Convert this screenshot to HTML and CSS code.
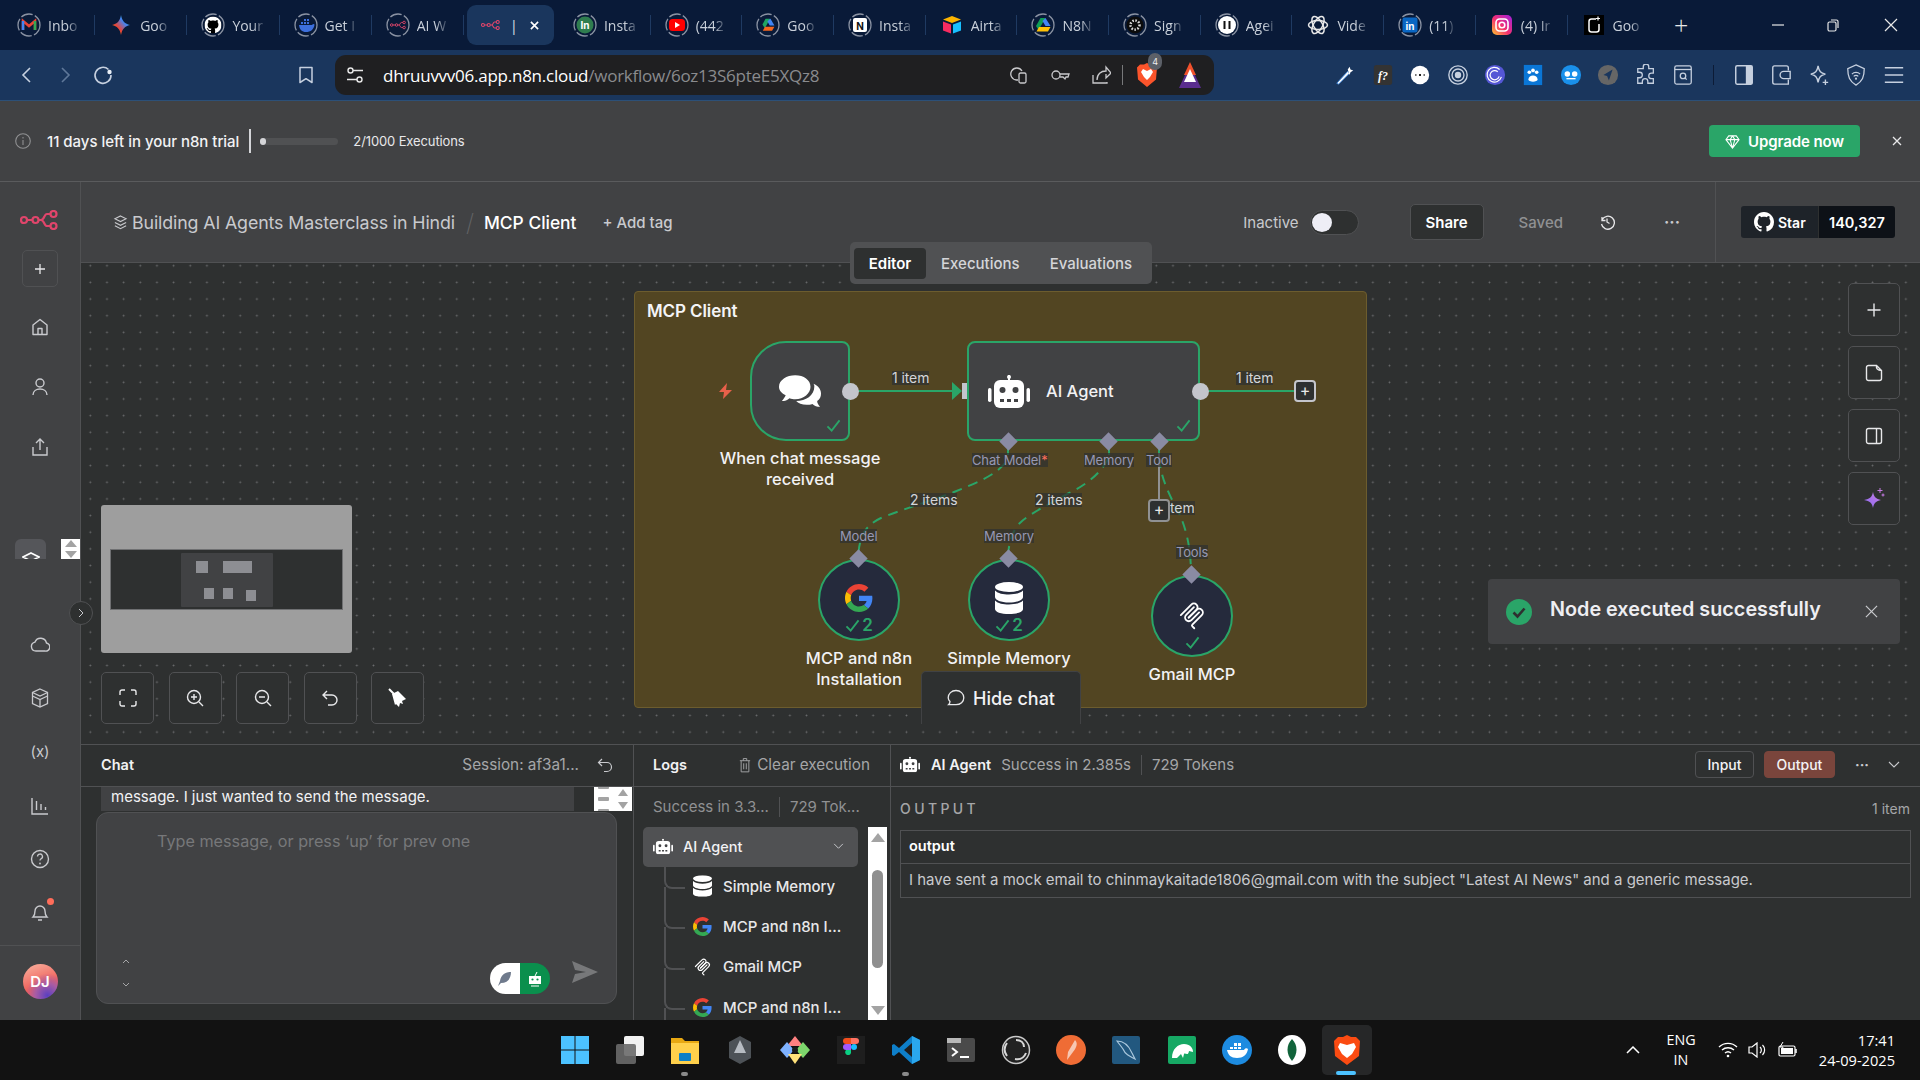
FILE: index.html
```html
<!DOCTYPE html>
<html lang="en">
<head>
<meta charset="utf-8">
<title>MCP Client - n8n</title>
<link rel="stylesheet" href="styles.css">
</head>
<body>
<svg class="sprite" width="0" height="0" aria-hidden="true">
  <defs>
    <symbol id="g" viewBox="0 0 48 48">
      <path fill="#EA4335" d="M24 9.5c3.54 0 6.71 1.22 9.21 3.6l6.85-6.85C35.9 2.38 30.47 0 24 0 14.62 0 6.51 5.38 2.56 13.22l7.98 6.19C12.43 13.72 17.74 9.5 24 9.5z"/>
      <path fill="#4285F4" d="M46.98 24.55c0-1.57-.15-3.09-.38-4.55H24v9.02h12.94c-.58 2.96-2.26 5.48-4.78 7.18l7.73 6c4.51-4.18 7.09-10.36 7.09-17.65z"/>
      <path fill="#FBBC05" d="M10.53 28.59c-.48-1.45-.76-2.99-.76-4.59s.27-3.14.76-4.59l-7.98-6.19C.92 16.46 0 20.12 0 24c0 3.88.92 7.54 2.56 10.78l7.97-6.19z"/>
      <path fill="#34A853" d="M24 48c6.48 0 11.93-2.13 15.89-5.81l-7.73-6c-2.15 1.45-4.92 2.3-8.16 2.3-6.26 0-11.57-4.22-13.47-9.91l-7.98 6.19C6.51 42.62 14.62 48 24 48z"/>
    </symbol>
    <symbol id="robot" viewBox="0 0 42 33">
      <path fill="#fff" d="M20 0h2v5h-2z"/><circle cx="21" cy="2" r="2" fill="#fff"/>
      <rect x="6" y="5" width="30" height="28" rx="6" fill="#fff"/>
      <rect x="0" y="13" width="3.5" height="14" rx="1.7" fill="#fff"/><rect x="38.5" y="13" width="3.5" height="14" rx="1.7" fill="#fff"/>
      <circle cx="14.5" cy="15" r="3" fill="#414244"/><circle cx="27.5" cy="15" r="3" fill="#414244"/>
      <path fill="#414244" d="M12 24h4v3h-4zM19 24h4v3h-4zM26 24h4v3h-4z"/>
    </symbol>
    <symbol id="db" viewBox="0 0 28 32">
      <ellipse cx="14" cy="5" rx="14" ry="5" fill="#fff"/>
      <path fill="#fff" d="M0 8.5c3 3 8 4 14 4s11-1 14-4V15c0 3-6 5.500-14 5.500S0 18 0 15zM0 18.500c3 3 8 4 14 4s11-1 14-4V27c0 3-6 5-14 5S0 30 0 27z"/>
    </symbol>
    <symbol id="mcp" viewBox="0 0 195 195">
      <g fill="none" stroke="#fff" stroke-width="12" stroke-linecap="round">
        <path d="M25 97.85L92.88 29.97C102.25 20.6 117.45 20.6 126.82 29.97 136.2 39.34 136.2 54.54 126.82 63.91L75.56 115.18"/>
        <path d="M76.27 114.47L126.82 63.91C136.2 54.54 151.39 54.54 160.77 63.91L161.12 64.27C170.49 73.64 170.49 88.83 161.12 98.21L99.72 159.6C96.6 162.72 96.6 167.79 99.72 170.91L112.33 183.52"/>
        <path d="M109.85 46.94L59.65 97.15C50.28 106.52 50.28 121.71 59.65 131.09 69.02 140.46 84.22 140.46 93.59 131.09L143.79 80.88"/>
      </g>
    </symbol>
    <symbol id="n8n" viewBox="0 0 38 20">
      <g fill="none" stroke="#e0456b" stroke-width="2.200">
        <circle cx="4" cy="10" r="3"/><circle cx="15.500" cy="10" r="3"/><circle cx="33.500" cy="4" r="3"/><circle cx="33.500" cy="16" r="3"/>
        <path d="M7 10h5.500M18.500 10h2.500c3.500 0 3-6 6-6h3.500M21 10c3.500 0 3 6 6 6h3.500"/>
      </g>
    </symbol>
    <symbol id="ring" viewBox="0 0 24 24">
      <circle cx="12" cy="12" r="11" fill="none" stroke="#8b93a3" stroke-width="1.300" stroke-dasharray="12 2.400"/>
    </symbol>
    <symbol id="gh" viewBox="0 0 16 16">
      <path fill="currentColor" d="M8 0C3.58 0 0 3.58 0 8c0 3.54 2.29 6.53 5.47 7.59.4.07.55-.17.55-.38 0-.19-.01-.82-.01-1.49-2.01.37-2.53-.49-2.69-.94-.09-.23-.48-.94-.82-1.13-.28-.15-.68-.52-.01-.53.63-.01 1.08.58 1.23.82.72 1.21 1.87.87 2.33.66.07-.52.28-.87.51-1.07-1.78-.2-3.64-.89-3.64-3.95 0-.87.31-1.59.82-2.15-.08-.2-.36-1.02.08-2.12 0 0 .67-.21 2.2.82.64-.18 1.32-.27 2-.27.68 0 1.36.09 2 .27 1.53-1.04 2.2-.82 2.2-.82.44 1.1.16 1.92.08 2.12.51.56.82 1.27.82 2.15 0 3.07-1.87 3.75-3.65 3.95.29.25.54.73.54 1.48 0 1.07-.01 1.93-.01 2.2 0 .21.15.46.55.38A8.013 8.013 0 0016 8c0-4.42-3.58-8-8-8z"/>
    </symbol>
    <symbol id="drive" viewBox="0 0 24 22">
      <path fill="#1fa463" d="M8 0h8L6.500 16.500 2.500 10z"/><path fill="#4285f4" d="M16 0l7 12h-8L11 5z"/><path fill="#f4661e" d="M7 14h16l-4 7H3z"/>
    </symbol>
    <symbol id="check" viewBox="0 0 16 14"><path d="M1.500 8l4.500 4.500L14.500 1.500" fill="none" stroke="#2aa568" stroke-width="2"/></symbol>
  </defs>
</svg>

<div class="app">
  <div class="tabstrip">
    <div class="tab"><svg class="fav" viewBox="0 0 24 24"><use href="#ring"/><path d="M6 17V8l6 5 6-5v9" fill="none" stroke="#ea4335" stroke-width="2.500"/><path d="M6 17V8" stroke="#4285f4" stroke-width="2.500"/><path d="M18 17V8" stroke="#34a853" stroke-width="2.500"/></svg><span class="tab-label">Inbo</span></div>
    <div class="tab"><svg class="fav" viewBox="0 0 24 24"><defs><linearGradient id="gem" x1="0" y1="1" x2="1" y2="0"><stop offset="0" stop-color="#f4b400"/><stop offset=".35" stop-color="#ea4335"/><stop offset=".65" stop-color="#4285f4"/><stop offset="1" stop-color="#34a853"/></linearGradient></defs><path fill="url(#gem)" d="M12 2c1 6 4 9 9 10-5 1-8 4-9 10-1-6-4-9-9-10 5-1 8-4 9-10z"/></svg><span class="tab-label">Goo</span></div>
    <div class="tab"><svg class="fav" viewBox="0 0 24 24"><use href="#ring"/><circle cx="12" cy="12" r="8.500" fill="#000"/><use href="#gh" x="3.500" y="3.500" width="17" height="17" class="gh-white"/></svg><span class="tab-label">Your</span></div>
    <div class="tab"><svg class="fav" viewBox="0 0 24 24"><use href="#ring"/><path fill="#3d6fdc" d="M5 12h13c1-1.500 2-1 2.500-.5-.5 5-4 7.500-8.500 7.500-4 0-6.500-2.500-7-7zM7 9h2v2H7zM10 9h2v2h-2zM13 9h2v2h-2zM10 6h2v2h-2zM13 6h2v2h-2z"/></svg><span class="tab-label">Get I</span></div>
    <div class="tab"><svg class="fav" viewBox="0 0 24 24"><use href="#ring"/><use href="#n8n" x="4" y="7" width="16" height="10"/></svg><span class="tab-label">AI W</span></div>
    <div class="tab tab-active"><svg class="fav-n8n" viewBox="0 0 38 20"><use href="#n8n"/></svg><span class="tab-bar">|</span><svg class="tab-x" viewBox="0 0 10 10"><path d="M1 1l8 8M9 1L1 9" stroke="#fff" stroke-width="1.800"/></svg></div>
    <div class="tab"><svg class="fav" viewBox="0 0 24 24"><use href="#ring"/><circle cx="12" cy="12" r="8.500" fill="#2f7d4f"/><text x="12" y="16" class="fav-text">In</text></svg><span class="tab-label">Insta</span></div>
    <div class="tab"><svg class="fav" viewBox="0 0 24 24"><use href="#ring"/><rect x="4" y="6" width="16" height="12" rx="3.500" fill="#f00"/><path d="M10 9l5 3-5 3z" fill="#fff"/></svg><span class="tab-label">(442</span></div>
    <div class="tab"><svg class="fav" viewBox="0 0 24 24"><use href="#ring"/><use href="#drive" x="5" y="5.500" width="14" height="13"/></svg><span class="tab-label">Goo</span></div>
    <div class="tab"><svg class="fav" viewBox="0 0 24 24"><use href="#ring"/><rect x="5" y="5" width="14" height="14" rx="2" fill="#fff"/><text x="12" y="16.500" class="fav-text fav-dark">N</text></svg><span class="tab-label">Insta</span></div>
    <div class="tab"><svg class="fav" viewBox="0 0 24 24"><path fill="#fcb400" d="M12 3l9 3.500L12 10 3 6.500z"/><path fill="#18bfff" d="M13 11.500l8-3v9l-8 3z"/><path fill="#f82b60" d="M11 11.500L3 8.500v9l8 3z"/></svg><span class="tab-label">Airta</span></div>
    <div class="tab"><svg class="fav" viewBox="0 0 24 24"><use href="#ring"/><path fill="#0f9d58" d="M9.500 5h5L7.500 17l-2.500-4z"/><path fill="#4285f4" d="M14.500 5l5 8h-5l-3-5z"/><path fill="#ffc107" d="M8 14h11.500L17 18.500H5.500z"/></svg><span class="tab-label">N8N</span></div>
    <div class="tab"><svg class="fav" viewBox="0 0 24 24"><use href="#ring"/><circle cx="12" cy="12" r="8.500" fill="#0c0c0c"/><circle cx="12" cy="12" r="4.500" fill="none" stroke="#ddd" stroke-width="2.500" stroke-dasharray="1.500 1.500"/></svg><span class="tab-label">Sign</span></div>
    <div class="tab"><svg class="fav" viewBox="0 0 24 24"><use href="#ring"/><circle cx="12" cy="12" r="9" fill="#fff"/><path d="M9.500 8v8M14.500 8v8" stroke="#111" stroke-width="2"/></svg><span class="tab-label">Agei</span></div>
    <div class="tab"><svg class="fav" viewBox="0 0 24 24"><g fill="none" stroke="#e8e8e8" stroke-width="1.500"><ellipse cx="12" cy="12" rx="9.500" ry="4.500"/><ellipse cx="12" cy="12" rx="9.500" ry="4.500" transform="rotate(60 12 12)"/><ellipse cx="12" cy="12" rx="9.500" ry="4.500" transform="rotate(120 12 12)"/></g></svg><span class="tab-label">Vide</span></div>
    <div class="tab"><svg class="fav" viewBox="0 0 24 24"><use href="#ring"/><rect x="4.500" y="4.500" width="15" height="15" rx="2" fill="#0a66c2"/><text x="12" y="16.500" class="fav-text">in</text></svg><span class="tab-label">(11)</span></div>
    <div class="tab"><svg class="fav" viewBox="0 0 24 24"><defs><linearGradient id="ig" x1="0" y1="1" x2="1" y2="0"><stop offset="0" stop-color="#fdc830"/><stop offset=".45" stop-color="#f5306f"/><stop offset="1" stop-color="#a020e0"/></linearGradient></defs><rect x="2" y="2" width="20" height="20" rx="5" fill="url(#ig)"/><rect x="6" y="6" width="12" height="12" rx="3.500" fill="none" stroke="#fff" stroke-width="1.600"/><circle cx="12" cy="12" r="2.800" fill="none" stroke="#fff" stroke-width="1.600"/></svg><span class="tab-label">(4) Ir</span></div>
    <div class="tab tab-last"><svg class="fav" viewBox="0 0 24 24"><rect x="2" y="2" width="20" height="20" fill="#000"/><path d="M14 6H9.500A2.500 2.500 0 0 0 7 8.500v8A2.500 2.500 0 0 0 9.500 19h5a2.500 2.500 0 0 0 2.500-2.500V11" fill="none" stroke="#fff" stroke-width="1.500"/><path d="M16 3.500v4M14 5.500h4" stroke="#fff" stroke-width="1.200"/></svg><span class="tab-label">Goo</span></div>
    <div class="tab-new">+</div>
    <div class="win">
      <svg class="win-ic" viewBox="0 0 14 14"><path d="M1 7h12" stroke="#e8e8e8" stroke-width="1.200"/></svg>
      <svg class="win-ic" viewBox="0 0 14 14"><rect x="2" y="4" width="8" height="9" rx="1.500" fill="none" stroke="#e8e8e8" stroke-width="1.200"/><path d="M5 2h5.500A1.500 1.500 0 0 1 12 3.500V10" fill="none" stroke="#e8e8e8" stroke-width="1.200"/></svg>
      <svg class="win-ic" viewBox="0 0 14 14"><path d="M1 1l12 12M13 1L1 13" stroke="#e8e8e8" stroke-width="1.200"/></svg>
    </div>
  </div>

  <div class="toolbar">
    <button class="tb"><svg class="ic18" viewBox="0 0 18 18"><path d="M12 2L5 9l7 7" fill="none" stroke="#c6d0df" stroke-width="1.600"/></svg></button>
    <button class="tb"><svg class="ic18" viewBox="0 0 18 18"><path d="M6 2l7 7-7 7" fill="none" stroke="#5f7899" stroke-width="1.600"/></svg></button>
    <button class="tb"><svg class="ic20" viewBox="0 0 20 20"><path d="M15.500 4.500A8 8 0 1 0 18 10" fill="none" stroke="#c6d0df" stroke-width="1.600"/><circle cx="16.500" cy="7" r="2.200" fill="#e8eef6"/></svg></button>
    <button class="tb tb-book"><svg class="ic20" viewBox="0 0 20 20"><path d="M4 2.500h12v15l-6-3.800-6 3.800z" fill="none" stroke="#c6d0df" stroke-width="1.500" stroke-linejoin="round"/></svg></button>
    <div class="urlbar">
      <svg class="url-tune" viewBox="0 0 18 18"><g fill="none" stroke="#e8e8e8" stroke-width="1.400"><circle cx="4.500" cy="4.500" r="2.500"/><circle cx="13.500" cy="13.500" r="2.500"/><path d="M7 4.500h10M1 13.500h10"/></g></svg>
      <span class="url-host">dhruuvvv06.app.n8n.cloud</span><span class="url-path">/workflow/6oz13S6pteE5XQz8</span>
      <div class="url-right">
        <svg class="url-ic" viewBox="0 0 20 20"><g fill="none" stroke="#c9c9cc" stroke-width="1.300"><path d="M9 15H7.500a6 6 0 1 1 5.500-9"/><rect x="10" y="8" width="7" height="10" rx="1.500"/></g></svg>
        <svg class="url-ic" viewBox="0 0 20 20"><g fill="none" stroke="#c9c9cc" stroke-width="1.300"><circle cx="6" cy="10" r="4"/><path d="M10 9h9l-1 3h-2l-1 2-2-2h-3"/></g></svg>
        <svg class="url-ic" viewBox="0 0 20 20"><g fill="none" stroke="#c9c9cc" stroke-width="1.300"><path d="M2 10v8h14v-1"/><path d="M6 15c0-6 4-9 9-9V2l5 6-5 5V9"/></g></svg>
        <span class="url-sep"></span>
        <span class="brave"><svg class="brave-ic" viewBox="0 0 20 24"><path fill="#fb542b" d="M10 0l3 1.500h4l3 3-1 12-9 7.500-9-7.500-1-12 3-3h4z"/><path fill="#fff" d="M6 6l4 2 4-2 2 3-3 5-3 3-3-3-3-5z"/></svg><span class="brave-badge">4</span></span>
        <svg class="url-tri" viewBox="0 0 22 26"><path fill="#f1512c" d="M11 0l6 13H5z"/><path fill="#5a2d8f" d="M0 26L6 13h10l6 13z"/><path fill="#fff" d="M11 7l6 13H5z"/></svg>
      </div>
    </div>
    <div class="exts">
      <svg class="ext" viewBox="0 0 24 24"><path d="M3 21L15 8l2 2L5 22z" fill="#fff" stroke="#3b82d6" stroke-width="1"/><path d="M15 6l2-3 1 3 3 1-3 2-1 3-1-3z" fill="#fff"/></svg>
      <svg class="ext" viewBox="0 0 24 24"><rect x="2" y="1" width="20" height="22" rx="3" fill="#333"/><text x="12" y="17" class="ext-f">f?</text></svg>
      <svg class="ext" viewBox="0 0 24 24"><circle cx="12" cy="12" r="10" fill="#fff"/><path d="M7 12h1M11 12h2M16 12h1" stroke="#111" stroke-width="2"/></svg>
      <svg class="ext" viewBox="0 0 24 24"><g fill="none" stroke="#c6d0df" stroke-width="1.500"><circle cx="12" cy="12" r="10"/><circle cx="12" cy="12" r="6.500"/></g><circle cx="12" cy="12" r="3.500" fill="#c6d0df"/></svg>
      <svg class="ext" viewBox="0 0 24 24"><circle cx="12" cy="12" r="11" fill="#5557d6"/><g fill="none" stroke="#fff" stroke-width="1.300"><path d="M17 6a8 8 0 1 0 2 8"/><path d="M15 8.500a5 5 0 1 0 1.500 5"/></g></svg>
      <svg class="ext" viewBox="0 0 24 24"><rect x="2" y="1" width="20" height="22" fill="#0a76d6"/><circle cx="8" cy="9" r="2" fill="#fff"/><circle cx="16" cy="9" r="2" fill="#fff"/><circle cx="12" cy="7" r="2" fill="#fff"/><path d="M7 17c0-6 10-6 10 0 0 3-10 3-10 0z" fill="#fff"/></svg>
      <svg class="ext" viewBox="0 0 24 24"><circle cx="12" cy="12" r="11" fill="#1a90ea"/><circle cx="8" cy="11" r="3" fill="#fff"/><circle cx="16" cy="11" r="3" fill="#fff"/><path d="M7 16h10" stroke="#fff" stroke-width="1.500"/></svg>
      <svg class="ext" viewBox="0 0 24 24"><circle cx="12" cy="12" r="11" fill="#666"/><path d="M7 12l10-6-4 12-2-5z" fill="#1a365d"/></svg>
      <svg class="ext" viewBox="0 0 24 24"><path d="M9 3a3 3 0 0 1 6 0v2h5v5h-2a3 3 0 0 0 0 6h2v5h-6v-2a3 3 0 0 0-6 0v2H3v-6h2a3 3 0 0 0 0-6H3V5h6z" fill="none" stroke="#c6d0df" stroke-width="1.400"/></svg>
      <svg class="ext" viewBox="0 0 24 24"><rect x="3" y="2" width="18" height="20" rx="2" fill="none" stroke="#c6d0df" stroke-width="1.400"/><path d="M3 6h18" stroke="#c6d0df" stroke-width="1.400"/><circle cx="12" cy="13" r="3" fill="none" stroke="#c6d0df" stroke-width="1.400"/><path d="M14 15l2 2" stroke="#c6d0df" stroke-width="1.400"/></svg>
      <span class="ext-sep"></span>
      <svg class="ext" viewBox="0 0 24 24"><rect x="3" y="2" width="18" height="20" rx="1.500" fill="none" stroke="#c6d0df" stroke-width="1.600"/><rect x="14" y="2" width="7" height="20" fill="#c6d0df"/></svg>
      <svg class="ext" viewBox="0 0 24 24"><path d="M20 7V4a2 2 0 0 0-2-2H5a2 2 0 0 0-2 2v16a2 2 0 0 0 2 2h15v-5" fill="none" stroke="#c6d0df" stroke-width="1.500"/><path d="M22 8h-7a4 4 0 0 0 0 8h7z" fill="none" stroke="#c6d0df" stroke-width="1.500"/></svg>
      <svg class="ext" viewBox="0 0 24 24"><path d="M11 2c1 6 3 8 8 9-5 1-7 3-8 9-1-6-3-8-8-9 5-1 7-3 8-9z" fill="none" stroke="#c6d0df" stroke-width="1.500"/><path d="M19 17v6M16 20h6" stroke="#c6d0df" stroke-width="1.500"/></svg>
      <svg class="ext" viewBox="0 0 24 24"><path d="M12 1l9 4c0 9-2 14-9 18-7-4-9-9-9-18z" fill="none" stroke="#c6d0df" stroke-width="1.400"/><path d="M7.500 11a6.500 6.500 0 0 1 9 0M9.500 13.500a3.500 3.500 0 0 1 5 0" fill="none" stroke="#c6d0df" stroke-width="1.300"/><circle cx="12" cy="16" r="1.200" fill="#c6d0df"/></svg>
      <svg class="ext" viewBox="0 0 24 24"><path d="M2 4h20M2 12h20M2 20h20" stroke="#c6d0df" stroke-width="1.700"/></svg>
    </div>
  </div>

  <div class="banner">
    <svg class="ban-info" viewBox="0 0 16 16"><circle cx="8" cy="8" r="7.300" fill="none" stroke="#909193" stroke-width="1.100"/><path d="M8 7v5M8 4v1.400" stroke="#909193" stroke-width="1.100"/></svg>
    <span class="ban-text">11 days left in your n8n trial</span>
    <span class="ban-div"></span>
    <span class="ban-bar"><span class="ban-dot"></span></span>
    <span class="ban-exec">2/1000 Executions</span>
    <button class="upgrade"><svg class="gem" viewBox="0 0 16 16"><path d="M4 2h8l3 4-7 9-7-9zM1 6h14M5.500 6L8 15l2.500-9L8 2 5.500 6z" fill="none" stroke="#fff" stroke-width="1.100"/></svg>Upgrade now</button>
    <svg class="ban-x" viewBox="0 0 10 10"><path d="M1 1l8 8M9 1L1 9" stroke="#e8e8ea" stroke-width="1.300"/></svg>
  </div>

  <div class="main">
    <aside class="side">
      <svg class="side-logo" viewBox="0 0 38 20"><use href="#n8n"/></svg>
      <div class="side-add"><svg class="ic12" viewBox="0 0 12 12"><path d="M6 1v10M1 6h10" stroke="#e8e8ea" stroke-width="1.300"/></svg></div>
      <svg class="sic sic-home" viewBox="0 0 20 20"><path d="M3 8l7-5.500L17 8v9.500H3zM8 17.500v-6h4v6" fill="none" stroke="#c9cace" stroke-width="1.400" stroke-linejoin="round"/></svg>
      <svg class="sic sic-user" viewBox="0 0 20 20"><circle cx="10" cy="6" r="4" fill="none" stroke="#c9cace" stroke-width="1.400"/><path d="M3 18c0-8 14-8 14 0" fill="none" stroke="#c9cace" stroke-width="1.400"/></svg>
      <svg class="sic sic-share" viewBox="0 0 20 20"><path d="M3 10v8h14v-8M10 13V2M6 6l4-4 4 4" fill="none" stroke="#c9cace" stroke-width="1.400"/></svg>
      <div class="side-glitch">
        <span class="glitch-box"><svg class="glitch-ic" viewBox="0 0 18 10"><path d="M9 1l8 4-8 4-8-4z" fill="none" stroke="#fff" stroke-width="1.600"/></svg></span>
        <span class="glitch-scroll"><span class="tri-up"></span><span class="tri-down"></span></span>
      </div>
      <svg class="sic sic-cloud" viewBox="0 0 20 20"><path d="M6 17a4.500 4.500 0 0 1-1-8.900A6 6 0 0 1 16.500 9a4 4 0 0 1-1.500 8z" fill="none" stroke="#c9cace" stroke-width="1.400"/></svg>
      <svg class="sic sic-cube" viewBox="0 0 20 20"><g fill="none" stroke="#c9cace" stroke-width="1.300"><path d="M10 1l7.500 3.500v11L10 19l-7.500-3.500v-11z"/><path d="M2.500 8L10 11.500 17.500 8M10 11.500V19M2.500 4.500L10 8l7.500-3.500"/></g></svg>
      <span class="sic-x">(x)</span>
      <svg class="sic sic-chart" viewBox="0 0 20 20"><path d="M2 2v16h16M6.500 14V5M11 14V8M15.500 14v-3" fill="none" stroke="#c9cace" stroke-width="1.400"/></svg>
      <svg class="sic sic-help" viewBox="0 0 20 20"><circle cx="10" cy="10" r="8.500" fill="none" stroke="#c9cace" stroke-width="1.400"/><path d="M7.500 7.500a2.500 2.500 0 1 1 3.500 2.300c-.7.400-1 .8-1 1.700" fill="none" stroke="#c9cace" stroke-width="1.300"/><circle cx="10" cy="14.500" r=".9" fill="#c9cace"/></svg>
      <span class="bell-wrap"><svg class="sic" viewBox="0 0 20 20"><path d="M3 15c1.500-1.500 2-3 2-6a5 5 0 0 1 10 0c0 3 .5 4.500 2 6zM8 18h4" fill="none" stroke="#c9cace" stroke-width="1.400"/></svg><span class="bell-dot"></span></span>
      <div class="side-foot"><span class="avatar">DJ</span></div>
      <span class="side-toggle"><svg class="ic8" viewBox="0 0 8 10"><path d="M2 1l4 4-4 4" fill="none" stroke="#c9cace" stroke-width="1"/></svg></span>
    </aside>

    <div class="work">
      <header class="head">
        <svg class="head-stack" viewBox="0 0 16 16"><g fill="none" stroke="#c9cace" stroke-width="1.100"><path d="M8 1l6 3-6 3-6-3z"/><path d="M2 8l6 3 6-3M2 11.500l6 3 6-3"/></g></svg>
        <span class="crumb">Building AI Agents Masterclass in Hindi</span>
        <span class="crumb-sep">/</span>
        <span class="crumb-cur">MCP Client</span>
        <span class="add-tag">+ Add tag</span>
        <span class="inactive">Inactive</span>
        <span class="toggle"><span class="knob"></span></span>
        <button class="share">Share</button>
        <span class="saved">Saved</span>
        <svg class="hist" viewBox="0 0 16 16"><path d="M3 3v3.500h3.500M2.500 10a6.500 6.500 0 1 0 .6-4.300M8 4.500V8l2.500 1.500" fill="none" stroke="#e8e8ea" stroke-width="1.300"/></svg>
        <span class="dots">···</span>
        <div class="star-area">
          <div class="star-box">
            <span class="star-l"><svg class="star-gh" viewBox="0 0 16 16"><use href="#gh"/></svg>Star</span>
            <span class="star-r">140,327</span>
          </div>
        </div>
      </header>

      <section class="canvas">
        <div class="view-tabs"><span class="vt vt-on">Editor</span><span class="vt">Executions</span><span class="vt">Evaluations</span></div>

        <div class="sticky"><span class="sticky-title">MCP Client</span></div>

        <svg class="edges" width="1838" height="481" viewBox="0 0 1838 481">
          <g fill="none" stroke="#2aa568" stroke-width="2">
            <path d="M777 128H873"/>
            <path d="M1118 128H1213"/>
            <path d="M927 178v14M1028 178v14M1078 178v14"/>
            <g stroke-dasharray="10 7">
              <path d="M924 200C915 212 895 220 873 229C850 238 825 245 800 255C785 262 778 272 777 296"/>
              <path d="M1027 196C1020 210 1005 222 988 230C970 240 950 250 940 259C932 266 927 280 927 296"/>
              <path d="M1078 195C1080 215 1088 232 1098 250C1105 265 1110 285 1110 311"/>
            </g>
          </g>
          <path d="M1078 190V237" stroke="#909193" stroke-width="2"/>
          <path d="M871 119l10 9-10 9z" fill="#2aa568"/>
        </svg>

        <span class="elabel el-1">1 item</span>
        <span class="elabel el-2">1 item</span>
        <span class="elabel el-3">2 items</span>
        <span class="elabel el-4">2 items</span>
        <span class="elabel el-5">tem</span>

        <svg class="bolt" viewBox="0 0 15 16"><path d="M9 0L1 9h5l-1 7 9-9H8z" fill="#e8604a"/></svg>

        <div class="node n-trigger">
          <svg class="chat-ic" viewBox="0 0 44 34"><path fill="#fff" d="M17 0c9 0 16 5 16 12 0 7-7 13-16 13-2 0-4 0-6-1-2 2-5 3-8 3 2-2 3-4 4-6-4-2-7-5-7-9C0 5 8 0 17 0z"/><path fill="#fff" d="M36 9c5 2 8 6 8 10 0 3-1 6-4 8 0 2 1 4 3 6-3 0-6-1-8-3-2 1-4 1-6 1-5 0-9-2-11-4 10 0 19-6 19-15 0-1 0-2-1-3z"/></svg>
          <svg class="n-check" viewBox="0 0 16 14"><use href="#check"/></svg>
        </div>
        <span class="dot d-1"></span>
        <span class="input-port"></span>

        <div class="node n-agent">
          <svg class="robot-ic" viewBox="0 0 42 33"><use href="#robot"/></svg>
          <span class="agent-name">AI Agent</span>
          <svg class="n-check" viewBox="0 0 16 14"><use href="#check"/></svg>
        </div>
        <span class="dot d-2"></span>
        <span class="plus p-out">+</span>

        <span class="dia di-1"></span><span class="dia di-2"></span><span class="dia di-3"></span>

        <span class="plabel pl-chat">Chat Model<b class="req">*</b></span>
        <span class="plabel pl-mem">Memory</span>
        <span class="plabel pl-tool">Tool</span>
        <span class="plus p-tool">+</span>
        <span class="plabel pl-model">Model</span>
        <span class="plabel pl-mem2">Memory</span>
        <span class="plabel pl-tools">Tools</span>

        <div class="circ c-model"><svg class="c-g" viewBox="0 0 48 48"><use href="#g"/></svg><span class="c-count"><svg class="c-check" viewBox="0 0 16 14"><use href="#check"/></svg>2</span></div>
        <div class="circ c-mem"><svg class="c-db" viewBox="0 0 28 32"><use href="#db"/></svg><span class="c-count"><svg class="c-check" viewBox="0 0 16 14"><use href="#check"/></svg>2</span></div>
        <div class="circ c-gmail"><svg class="c-mcp" viewBox="0 0 195 195"><use href="#mcp"/></svg><span class="c-count"><svg class="c-check" viewBox="0 0 16 14"><use href="#check"/></svg></span></div>
        <span class="dia di-4"></span><span class="dia di-5"></span><span class="dia di-6"></span>

        <span class="nlabel nl-trig">When chat message received</span>
        <span class="nlabel nl-model">MCP and n8n Installation</span>
        <span class="nlabel nl-mem">Simple Memory</span>
        <span class="nlabel nl-gmail">Gmail MCP</span>

        <button class="hide-chat"><svg class="hc-ic" viewBox="0 0 18 18"><path d="M9 1.500c4.500 0 7.800 3.200 7.800 7.200s-3.300 7-7.800 7H1.500c1-1 1.500-2.200 1.500-3.200-1-1-1.800-2.400-1.800-3.800C1.200 4.700 4.500 1.500 9 1.500z" fill="none" stroke="#e8e8ea" stroke-width="1.300"/></svg>Hide chat</button>

        <div class="minimap">
          <div class="mm-inner"><div class="mm-sticky">
            <span class="mm mm-a"></span><span class="mm mm-b"></span><span class="mm mm-c"></span><span class="mm mm-d"></span><span class="mm mm-e"></span>
          </div></div>
        </div>

        <div class="ctrls">
          <button class="ctrl"><svg class="ic18" viewBox="0 0 18 18"><path d="M1 6V3a2 2 0 0 1 2-2h3M12 1h3a2 2 0 0 1 2 2v3M17 12v3a2 2 0 0 1-2 2h-3M6 17H3a2 2 0 0 1-2-2v-3" fill="none" stroke="#e8e8ea" stroke-width="1.400"/></svg></button>
          <button class="ctrl"><svg class="ic18" viewBox="0 0 18 18"><circle cx="8" cy="8" r="6.500" fill="none" stroke="#e8e8ea" stroke-width="1.400"/><path d="M13 13l4 4M5 8h6M8 5v6" stroke="#e8e8ea" stroke-width="1.400"/></svg></button>
          <button class="ctrl"><svg class="ic18" viewBox="0 0 18 18"><circle cx="8" cy="8" r="6.500" fill="none" stroke="#e8e8ea" stroke-width="1.400"/><path d="M13 13l4 4M5 8h6" stroke="#e8e8ea" stroke-width="1.400"/></svg></button>
          <button class="ctrl"><svg class="ic18" viewBox="0 0 18 18"><path d="M6 2L2 6l4 4M2 6h9a5 5 0 0 1 0 10H7" fill="none" stroke="#e8e8ea" stroke-width="1.400"/></svg></button>
          <button class="ctrl"><svg class="ic22" viewBox="0 0 22 22"><path d="M2 2l6 6" stroke="#fff" stroke-width="2"/><path d="M5 7l6-3 8 8-4 2 1 3-3-1-1 4-3-3-1 1z" fill="#fff"/></svg></button>
        </div>

        <div class="rbtns">
          <button class="rbtn"><svg class="ic16" viewBox="0 0 16 16"><path d="M8 1.500v13M1.500 8h13" stroke="#e8e8ea" stroke-width="1.400"/></svg></button>
          <button class="rbtn"><svg class="ic18" viewBox="0 0 18 18"><path d="M3.500 1.500h8l5 5v8a2 2 0 0 1-2 2h-11a2 2 0 0 1-2-2v-11a2 2 0 0 1 2-2zM11.500 1.500c-.5 3 1 5 5 5" fill="none" stroke="#e8e8ea" stroke-width="1.400"/></svg></button>
          <button class="rbtn"><svg class="ic18" viewBox="0 0 18 18"><rect x="1.500" y="1.500" width="15" height="15" rx="2" fill="none" stroke="#e8e8ea" stroke-width="1.400"/><path d="M11.500 1.500v15" stroke="#e8e8ea" stroke-width="1.400"/></svg></button>
          <button class="rbtn"><svg class="ic22" viewBox="0 0 22 22"><defs><linearGradient id="spark" x1="0" y1="1" x2="1" y2="0"><stop offset="0" stop-color="#8b6cf0"/><stop offset="1" stop-color="#c77ae6"/></linearGradient></defs><path d="M10 4c1 5 3 7 8 8-5 1-7 3-8 8-1-5-3-7-9-8 6-1 8-3 9-8z" fill="url(#spark)"/><path d="M17 0v5M14.500 2.500h5M20 5.500v3M18.500 7h3" stroke="#c77ae6" stroke-width="1"/></svg></button>
        </div>

        <div class="toast">
          <svg class="toast-ic" viewBox="0 0 26 26"><circle cx="13" cy="13" r="13" fill="#2aa568"/><path d="M7.500 13.500l4 4 7-8" fill="none" stroke="#2e3030" stroke-width="2.600"/></svg>
          <span class="toast-text">Node executed successfully</span>
          <svg class="toast-x" viewBox="0 0 14 14"><path d="M1 1l12 12M13 1L1 13" stroke="#c9cace" stroke-width="1.300"/></svg>
        </div>
      </section>

      <section class="panel">
        <div class="p-chat">
          <div class="p-head">
            <span class="p-title">Chat</span>
            <span class="session">Session: af3a1...</span>
            <svg class="undo" viewBox="0 0 16 16"><path d="M5 2L1.500 5.500 5 9M1.500 5.500H10a4.500 4.500 0 0 1 0 9H7" fill="none" stroke="#c9cace" stroke-width="1.200"/></svg>
          </div>
          <div class="msg-row">
            <div class="msg">message. I just wanted to send the message.</div>
            <div class="msg-scroll"><span class="ms-dashes"><i></i><i></i><i></i></span><span class="ms-tris"><span class="tri-up"></span><span class="tri-down"></span></span></div>
          </div>
          <div class="chat-input">
            <span class="ph">Type message, or press ‘up’ for prev one</span>
            <div class="ci-bottom">
              <span class="ci-arrows"><svg class="ic8w" viewBox="0 0 8 5"><path d="M1 4l3-3 3 3" fill="none" stroke="#a5a6a8"/></svg><svg class="ic8w" viewBox="0 0 8 5"><path d="M1 1l3 3 3-3" fill="none" stroke="#a5a6a8"/></svg></span>
              <span class="pill">
                <span class="pill-l"><svg class="ic16" viewBox="0 0 16 16"><path d="M14 1C8 1 4 4 3 10l-2 5 3-3c6 0 10-4 10-11z" fill="#6f7a8c"/></svg></span>
                <span class="pill-r"><svg class="ic18" viewBox="0 0 18 18"><path d="M3 6h12v8H3z" fill="#fff"/><path d="M9 6l2-4" stroke="#fff"/><circle cx="6.500" cy="9.500" r="1.100" fill="#0a8f4d"/><circle cx="11.500" cy="9.500" r="1.100" fill="#0a8f4d"/><path d="M5 16h8" stroke="#fff"/></svg></span>
              </span>
              <svg class="send" viewBox="0 0 26 22"><path d="M0 0l26 11L0 22l3-9 11-2-11-2z" fill="#77787a"/></svg>
            </div>
          </div>
        </div>

        <div class="p-logs">
          <div class="p-head">
            <span class="p-title">Logs</span>
            <span class="clear"><svg class="clear-ic" viewBox="0 0 14 18"><path d="M1 4h12M5 4V1.500h4V4M2.500 4v13h9V4M5.500 7v7M8.500 7v7" fill="none" stroke="#a5a6a8" stroke-width="1.100"/></svg>Clear execution</span>
          </div>
          <div class="logs-sub"><span>Success in 3.3...</span><i class="vline"></i><span>729 Tok...</span></div>
          <div class="logs-body">
            <div class="tree">
              <div class="t-root"><svg class="t-robot" viewBox="0 0 42 33"><use href="#robot"/></svg><span class="t-root-name">AI Agent</span><svg class="t-chev" viewBox="0 0 12 8"><path d="M1 1l5 5 5-5" fill="none" stroke="#c9cace" stroke-width="1.100"/></svg></div>
              <div class="t-row"><svg class="t-ic t-db" viewBox="0 0 28 32"><use href="#db"/></svg><span>Simple Memory</span></div>
              <div class="t-row"><svg class="t-ic" viewBox="0 0 48 48"><use href="#g"/></svg><span>MCP and n8n I...</span></div>
              <div class="t-row"><svg class="t-ic" viewBox="0 0 195 195"><use href="#mcp"/></svg><span>Gmail MCP</span></div>
              <div class="t-row"><svg class="t-ic" viewBox="0 0 48 48"><use href="#g"/></svg><span>MCP and n8n I...</span></div>
            </div>
            <div class="log-scroll"><span class="tri-up tri-big"></span><span class="thumb"></span><span class="tri-down tri-big"></span></div>
          </div>
        </div>

        <div class="p-detail">
          <div class="p-head d-head">
            <svg class="d-robot" viewBox="0 0 42 33"><use href="#robot"/></svg>
            <span class="d-name">AI Agent</span>
            <span class="d-meta">Success in 2.385s</span>
            <i class="vline d-vline"></i>
            <span class="d-meta">729 Tokens</span>
            <button class="d-btn d-input">Input</button>
            <button class="d-btn d-output">Output</button>
            <span class="d-dots">···</span>
            <svg class="d-chev" viewBox="0 0 12 8"><path d="M1 1l5 5 5-5" fill="none" stroke="#c9cace" stroke-width="1.100"/></svg>
          </div>
          <div class="out-row"><span class="out-label">OUTPUT</span><span class="out-count">1 item</span></div>
          <table class="out-table">
            <thead><tr><th>output</th></tr></thead>
            <tbody><tr><td>I have sent a mock email to chinmaykaitade1806@gmail.com with the subject "Latest AI News" and a generic message.</td></tr></tbody>
          </table>
        </div>
      </section>
    </div>
  </div>

  <footer class="taskbar">
    <div class="apps">
      <span class="app-ic"><svg viewBox="0 0 30 30"><path fill="#4cc2ff" d="M1 1h13.500v13.500H1zM15.500 1H29v13.500H15.500zM1 15.500h13.500V29H1zM15.500 15.500H29V29H15.500z"/></svg></span>
      <span class="app-ic"><svg viewBox="0 0 30 30"><rect x="9" y="1" width="20" height="20" rx="2" fill="#f2f2f2"/><rect x="1" y="9" width="20" height="20" rx="2" fill="#6a6a6a" opacity=".9"/></svg></span>
      <span class="app-ic app-run"><svg viewBox="0 0 30 30"><path fill="#e8a812" d="M1 3h11l3 3h14v23H1z"/><path fill="#ffd04b" d="M1 8h28v21H1z"/><rect x="9" y="18" width="12" height="8" rx="1" fill="#0d7fc6"/></svg></span>
      <span class="app-ic"><svg viewBox="0 0 30 30"><path fill="#4d5257" d="M15 1l11 6v16l-11 6-11-6V7z"/><path fill="#b7bcc2" d="M15 5l6 13H9z"/></svg></span>
      <span class="app-ic"><svg viewBox="0 0 30 30"><path fill="#ff8080" d="M15 1l8 10H7z"/><path fill="#7fb2ff" d="M7 7L0 15l7 8 7-8z"/><path fill="#7dd66c" d="M23 7l7 8-7 8-7-8z"/><path fill="#ffe27a" d="M15 29l-7-10h14z"/><circle cx="15" cy="15" r="3" fill="#1c1c1c"/></svg></span>
      <span class="app-ic"><svg viewBox="0 0 30 30"><rect x="1" y="1" width="28" height="28" fill="#1e1e1e"/><path fill="#f24e1e" d="M10 3h5v6h-5a3 3 0 0 1 0-6z"/><path fill="#ff7262" d="M15 3h5a3 3 0 0 1 0 6h-5z"/><path fill="#a259ff" d="M10 9h5v6h-5a3 3 0 0 1 0-6z"/><circle cx="18" cy="12" r="3" fill="#1abcfe"/><path fill="#0acf83" d="M10 15h5v3a3 3 0 1 1-5-3z"/></svg></span>
      <span class="app-ic app-run"><svg viewBox="0 0 30 30"><path fill="#0e7fc9" d="M21 1l8 4v20l-8 4-13-12-5 4-2-1V10l2-1 5 4z"/><path fill="#2aa7ee" d="M21 1v28l8-4V5z"/><path fill="#1e1e1e" d="M21 8l-8 7 8 7z"/></svg></span>
      <span class="app-ic"><svg viewBox="0 0 30 30"><rect x="1" y="3" width="28" height="24" rx="2" fill="#4a4a4a"/><rect x="1" y="3" width="14" height="5" fill="#b8b8b8"/><path d="M6 13l5 4-5 4" fill="none" stroke="#fff" stroke-width="2"/><path d="M14 22h9" stroke="#fff" stroke-width="2"/></svg></span>
      <span class="app-ic"><svg viewBox="0 0 30 30"><circle cx="15" cy="15" r="13.500" fill="#222" stroke="#c9c9c9" stroke-width="1.500"/><path d="M15 5c5 0 8 3 8 7M25 18c-2 5-6 7-11 6M6 21c-3-4-3-9 0-13" fill="none" stroke="#d8d8d8" stroke-width="2"/></svg></span>
      <span class="app-ic"><svg viewBox="0 0 30 30"><circle cx="15" cy="15" r="15" fill="#ef6c35"/><path d="M19 5c3 3 2 7-2 12l-6 8 1-8z" fill="#f7c7b2"/></svg></span>
      <span class="app-ic"><svg viewBox="0 0 30 30"><rect x="1" y="1" width="28" height="28" rx="2" fill="#22587f"/><path d="M6 6c7 0 12 5 15 12l3 6c-6-3-10-5-12-10-2-3-4-5-6-8z" fill="none" stroke="#a9c7dc" stroke-width="1.200"/></svg></span>
      <span class="app-ic"><svg viewBox="0 0 30 30"><rect x="1" y="1" width="28" height="28" rx="2" fill="#16a864"/><path d="M5 23c0-9 6-14 12-14s9 4 9 8l-4-1c-1 6-4 1-5 3l-1 4-2-4-4 4z" fill="#fff"/></svg></span>
      <span class="app-ic"><svg viewBox="0 0 30 30"><circle cx="15" cy="15" r="15" fill="#1d8be0"/><path fill="#fff" d="M5 15h17c1-2 3-2 4-1-1 6-5 9-11 9-6 0-9-3-10-8zM8 12h3v2H8zM12 12h3v2h-3zM16 12h3v2h-3zM12 8h3v3h-3zM16 8h3v3h-3z"/></svg></span>
      <span class="app-ic"><svg viewBox="0 0 30 30"><ellipse cx="15" cy="15" rx="14" ry="15" fill="#fff"/><path d="M15 4c-6 6-6 15 0 22 6-7 6-16 0-22z" fill="#11633a"/></svg></span>
      <span class="app-ic app-brave"><svg viewBox="0 0 30 30"><path fill="#fb4b12" d="M15 0l4 2h5l4 4-1 15-12 9-12-9L2 6l4-4h5z"/><path fill="#fff" d="M8 8l7 2 7-2 2 4-4 7-5 4-5-4-4-7z"/></svg><i class="brave-line"></i></span>
    </div>
    <div class="tray">
      <svg class="tray-up" viewBox="0 0 14 8"><path d="M1 7l6-6 6 6" fill="none" stroke="#fff" stroke-width="1.500"/></svg>
      <span class="lang">ENG<br>IN</span>
      <svg class="tray-ic" viewBox="0 0 20 16"><g fill="none" stroke="#fff" stroke-width="1.400"><path d="M1 5a13 13 0 0 1 18 0M4 8a9 9 0 0 1 12 0M7 11a4.500 4.500 0 0 1 6 0"/></g><circle cx="10" cy="14" r="1.300" fill="#fff"/></svg>
      <svg class="tray-ic" viewBox="0 0 20 16"><path d="M1 5h3l5-4v14l-5-4H1z" fill="none" stroke="#fff" stroke-width="1.200"/><path d="M12 5a4 4 0 0 1 0 6M14.500 3a7 7 0 0 1 0 10" fill="none" stroke="#fff" stroke-width="1.200"/></svg>
      <svg class="tray-ic" viewBox="0 0 20 16"><rect x="1" y="4" width="16" height="10" rx="1.500" fill="none" stroke="#fff" stroke-width="1.200"/><rect x="3" y="6" width="12" height="6" fill="#fff"/><path d="M18 7v4" stroke="#fff" stroke-width="1.500"/><path d="M5 0L2 5h3L4 8" fill="none" stroke="#fff"/></svg>
      <span class="clock">17:41<br>24-09-2025</span>
    </div>
  </footer>
</div>
</body>
</html>
```

FILE: styles.css
```css
* { box-sizing: border-box; }
html, body { margin: 0; padding: 0; }
body { font-family: Inter, "Liberation Sans", sans-serif; background: #2e3030; color: #e8e8ea; overflow: hidden; }
button { font: inherit; color: inherit; background: none; border: 0; padding: 0; display: flex; align-items: center; justify-content: center; }
i { font-style: normal; }
svg { display: block; flex: none; }
.sprite { position: absolute; }
.app { width: 1920px; height: 1080px; display: flex; flex-direction: column; overflow: hidden; }

.ic8 { width: 8px; height: 10px; }
.ic12 { width: 12px; height: 12px; }
.ic16 { width: 16px; height: 16px; }
.ic18 { width: 18px; height: 18px; }
.ic20 { width: 20px; height: 20px; }
.ic22 { width: 22px; height: 22px; }

/* tab strip */
.tabstrip { height: 50px; flex: none; background: #091a38; display: flex; align-items: center; padding-left: 3px; font-family: "Open Sans", "Noto Sans", sans-serif; }
.tab { width: 91.7px; height: 40px; flex: none; display: flex; align-items: center; padding-left: 14px; position: relative; }
.tab:nth-child(-n+5) { width: 92.2px; }
.tab:not(.tab-active):not(.tab-last)::after { content: ""; position: absolute; right: 0; top: 10px; height: 20px; width: 1px; background: #1f3a62; }
.tab-active { background: #1a365d; border-radius: 9px; width: 87px; margin: 0 5px 0 3px; padding-left: 14px; }
.fav { width: 24px; height: 24px; }
.fav-text { font: 700 10px Inter, sans-serif; fill: #fff; text-anchor: middle; }
.fav-dark { fill: #111; }
.gh-white { color: #fff; }
.tab-label { margin-left: 7px; white-space: nowrap; font-size: 14px; color: #c9d0da; -webkit-mask-image: linear-gradient(90deg, #000 65%, rgba(0,0,0,.25)); mask-image: linear-gradient(90deg, #000 65%, rgba(0,0,0,.25)); }
.fav-n8n { width: 19px; height: 10px; }
.tab-bar { margin-left: 10px; font-size: 14px; color: #dfe3ea; }
.tab-x { width: 9px; height: 9px; margin-left: 12px; }
.tab-new { margin-left: 12px; font-size: 25px; font-weight: 300; color: #e8e8e8; width: 20px; text-align: center; line-height: 1; }
.win { margin-left: auto; display: flex; }
.win-ic { width: 14px; height: 14px; margin-right: 41px; }
.win-ic:nth-child(2) { margin-right: 44px; }
.win-ic:last-child { margin-right: 22px; }

/* toolbar */
.toolbar { height: 51px; flex: none; background: #1a365d; border-bottom: 1px solid #2c5078; display: flex; align-items: center; padding-left: 8px; }
.tb { width: 38px; height: 38px; }
.tb-book { margin-left: 165px; }
.urlbar { width: 879px; height: 40px; margin-left: 10px; background: #1f1f21; border-radius: 11px; display: flex; align-items: center; padding-left: 11px; font-family: "Open Sans", "Noto Sans", sans-serif; font-size: 17px; letter-spacing: -.25px; }
.url-tune { width: 18px; height: 18px; margin-right: 19px; }
.url-host { color: #fff; }
.url-path { color: #8a8b8e; }
.url-right { margin-left: auto; display: flex; align-items: center; padding-right: 13px; }
.url-ic { width: 20px; height: 20px; margin-right: 21px; }
.url-sep { width: 1px; height: 20px; background: #77787a; margin: 0 14px 0 0; }
.url-ic:nth-child(3) { margin-right: 11px; }
.brave { position: relative; display: block; margin-right: 22px; }
.brave-ic { width: 20px; height: 24px; }
.brave-badge { position: absolute; left: 11px; top: -10px; width: 14px; height: 17px; border-radius: 8px; background: #5c6068; font: 9px Inter, sans-serif; color: #eee; display: flex; align-items: center; justify-content: center; }
.url-tri { width: 22px; height: 26px; }
.exts { display: flex; align-items: center; margin-left: 120px; gap: 15.600px; }
.ext { width: 22px; height: 22px; }
.ext-f { font: italic 700 13px "Liberation Serif", serif; fill: #fff; text-anchor: middle; }
.ext-sep { width: 1px; height: 20px; background: #0c1b36; margin: 0 3px; }

/* trial banner */
.banner { height: 81px; flex: none; background: #414244; border-bottom: 1px solid #5a5b5d; display: flex; align-items: center; padding-left: 15px; }
.ban-info { width: 16px; height: 16px; }
.ban-text { margin-left: 16px; font-size: 15px; font-weight: 500; color: #f2f2f4; letter-spacing: -.03px; }
.ban-div { width: 2px; height: 24px; background: #d4d5d8; margin-left: 10px; }
.ban-bar { width: 78px; height: 7px; margin-left: 9px; background: #505153; border-radius: 4px; display: block; }
.ban-dot { display: block; width: 6px; height: 7px; border-radius: 3px; background: #d4d5d8; }
.ban-exec { margin-left: 15px; font-size: 13px; color: #e8e8ea; letter-spacing: -.12px; }
.upgrade { margin-left: auto; width: 151px; height: 32px; background: #2aa568; border-radius: 4px; font-size: 15px; font-weight: 600; color: #fff; gap: 8px; letter-spacing: -.1px; }
.gem { width: 15px; height: 15px; }
.ban-x { width: 10px; height: 10px; margin: 0 18px 0 32px; }

/* main */
.main { flex: 1; display: flex; min-height: 0; }
.side { width: 81px; flex: none; background: #414244; border-right: 1px solid #505153; display: flex; flex-direction: column; align-items: center; position: relative; }
.side-logo { width: 38px; height: 20px; margin-top: 28px; margin-left: -2px; }
.side-add { width: 36px; height: 37px; margin-top: 20px; border: 1px solid #505153; border-radius: 5px; display: flex; align-items: center; justify-content: center; }
.sic { width: 20px; height: 20px; }
.sic-home { margin-top: 30px; }
.sic-user { margin-top: 40px; }
.sic-share { margin-top: 40px; }
.side-glitch { align-self: flex-start; margin: 82px 0 0 15px; display: flex; height: 20px; overflow: hidden; }
.glitch-box { width: 31px; height: 20px; background: #55565a; border-radius: 6px 6px 0 0; display: block; position: relative; }
.glitch-ic { position: absolute; left: 7px; top: 13px; width: 18px; height: 10px; }
.glitch-scroll { width: 19px; height: 20px; margin-left: 15px; background: #fff; display: flex; flex-direction: column; align-items: center; justify-content: space-between; padding: 1px 0; }
.tri-up, .tri-down { display: block; width: 0; height: 0; border-left: 6px solid transparent; border-right: 6px solid transparent; }
.tri-up { border-bottom: 7px solid #a3a3a3; }
.tri-down { border-top: 7px solid #a3a3a3; }
.sic-cloud { margin-top: 75px; }
.sic-cube { margin-top: 34px; }
.sic-x { margin-top: 33px; font-size: 15px; color: #c9cace; height: 22px; line-height: 22px; font-weight: 400; }
.sic-chart { margin-top: 33px; }
.sic-help { margin-top: 33px; }
.bell-wrap { margin-top: 33px; position: relative; display: block; }
.bell-dot { position: absolute; right: -4px; top: -4px; width: 7px; height: 7px; border-radius: 50%; background: #ff6d5a; }
.side-foot { position: absolute; left: 0; right: 0; bottom: 0; height: 75px; border-top: 1px solid #505153; display: flex; justify-content: center; padding-top: 18px; }
.avatar { width: 35px; height: 35px; border-radius: 50%; background: radial-gradient(circle at 70% 90%, #5a3fc0 0, #a75ca5 30%, transparent 55%), linear-gradient(160deg, #f9b4a0, #ef5f5a 60%); font-size: 15px; font-weight: 600; color: #fff; display: flex; align-items: center; justify-content: center; }
.side-toggle { position: absolute; left: 69px; top: 419px; width: 24px; height: 24px; border-radius: 50%; background: #2e3030; border: 1px solid #505153; display: flex; align-items: center; justify-content: center; z-index: 3; }

.work { flex: 1; min-width: 0; display: flex; flex-direction: column; }

/* header */
.head { height: 81px; flex: none; background: #414244; border-bottom: 1px solid #505153; display: flex; align-items: center; padding-left: 32px; }
.head-stack { width: 15px; height: 15px; }
.crumb { margin-left: 4px; font-size: 17.800px; color: #c9cace; letter-spacing: -.12px; }
.crumb-sep { margin-left: 11px; font-size: 24px; font-weight: 200; color: #636466; }
.crumb-cur { margin-left: 10px; font-size: 17.400px; color: #fff; font-weight: 500; }
.add-tag { margin-left: 26px; font-size: 15px; font-weight: 500; color: #c9cace; }
.inactive { margin-left: auto; font-size: 15px; color: #c9cace; }
.toggle { margin-left: 11px; width: 49px; height: 25px; border-radius: 13px; background: #2e3030; border: 1px solid #505153; display: block; padding: 2px 1px; }
.knob { display: block; width: 20px; height: 19px; border-radius: 50%; background: #eeeef6; }
.share { margin-left: 51px; width: 74px; height: 36px; background: #2e3030; border: 1px solid #505153; border-radius: 5px; font-size: 15px; font-weight: 600; color: #fff; }
.saved { margin-left: 35px; font-size: 15px; font-weight: 500; color: #909193; }
.hist { width: 16px; height: 16px; margin-left: 36px; }
.dots { margin-left: 49px; font-size: 16px; font-weight: 700; color: #c9cace; width: 16px; }
.star-area { width: 205px; height: 100%; margin-left: 35px; border-left: 1px solid #505153; display: flex; align-items: center; padding-left: 25px; }
.star-box { width: 154px; height: 32px; display: flex; border-radius: 3px; overflow: hidden; font-size: 15px; font-weight: 600; color: #fff; }
.star-l { width: 77px; background: #1e2329; display: flex; align-items: center; gap: 4px; padding-left: 13px; font-size: 14px; }
.star-gh { width: 20px; height: 20px; color: #fff; }
.star-r { flex: 1; background: #0d1117; display: flex; align-items: center; justify-content: center; border-left: 1px solid #2e3030; font-size: 14.500px; }

/* canvas */
.canvas { height: 481px; flex: none; position: relative; background-color: #2e3030; background-image: radial-gradient(circle at center, #6b6c6e 0, #6b6c6e .8px, transparent 1.100px); background-size: 16.667px 16.667px; background-position: 1px -5.600px; }
.view-tabs { position: absolute; left: 769px; top: -21px; width: 302px; height: 42px; background: #505153; border-radius: 5px; display: flex; align-items: center; padding-left: 4px; z-index: 4; font-size: 15px; font-weight: 500; color: #d4d5d8; }
.vt { height: 31px; flex: none; display: flex; align-items: center; padding: 0 15px; border-radius: 4px; }
.vt-on { background: #2e3030; color: #fff; font-weight: 600; width: 72px; justify-content: center; padding: 0; }

.sticky { position: absolute; left: 553px; top: 28px; width: 733px; height: 417px; background: #524522; border: 1px solid #6c5c2e; border-radius: 4px; padding: 9px 12px; }
.sticky-title { font-size: 17px; font-weight: 600; color: #f4f4f6; letter-spacing: -.1px; }
.edges { position: absolute; left: 0; top: 0; }
.elabel { position: absolute; font-size: 14px; line-height: 14px; color: #d4d5d8; background: rgba(46,48,48,.72); white-space: nowrap; letter-spacing: -.1px; }
.el-1 { left: 811px; top: 108px; }
.el-2 { left: 1155px; top: 108px; }
.el-3 { left: 829px; top: 230px; }
.el-4 { left: 954px; top: 230px; }
.el-5 { left: 1089px; top: 238px; }
.bolt { position: absolute; left: 637px; top: 120px; width: 15px; height: 16px; }
.node { position: absolute; top: 78px; height: 100px; background: #414244; border: 2px solid #2aa568; display: flex; align-items: center; }
.n-trigger { left: 669px; width: 100px; border-radius: 36px 8px 8px 36px; justify-content: center; }
.chat-ic { width: 42px; height: 33px; }
.n-agent { left: 886px; width: 233px; border-radius: 8px; padding-left: 19px; }
.robot-ic { width: 42px; height: 33px; }
.agent-name { margin-left: 16px; font-size: 16.500px; font-weight: 500; color: #f2f2f4; }
.n-check { position: absolute; right: 7px; bottom: 7px; width: 15px; height: 13px; }
.dot { position: absolute; width: 17px; height: 17px; border-radius: 50%; background: #c4c5cc; top: 120px; }
.d-1 { left: 761px; }
.d-2 { left: 1111px; }
.input-port { position: absolute; left: 881px; top: 120px; width: 9px; height: 16px; background: #c4c5cc; }
.plus { position: absolute; width: 22px; height: 22px; border: 2px solid #c4c5cc; border-radius: 4px; background: #2e3030; color: #e8e8e8; font-size: 16px; line-height: 17px; text-align: center; }
.p-out { left: 1213px; top: 117px; }
.p-tool { left: 1067px; top: 236px; height: 23px; z-index: 2; border-color: #909193; }
.dia { position: absolute; width: 13px; height: 13px; background: #8a8ba3; transform: rotate(45deg); z-index: 2; }
.di-1 { left: 921px; top: 171.500px; }
.di-2 { left: 1021px; top: 171.500px; }
.di-3 { left: 1071.500px; top: 171.500px; }
.di-4 { left: 771px; top: 288.500px; }
.di-5 { left: 921px; top: 288.500px; }
.di-6 { left: 1104px; top: 304.500px; }
.plabel { position: absolute; font-size: 13px; line-height: 14px; color: #9798b3; background: rgba(46,48,48,.72); white-space: nowrap; letter-spacing: -.15px; }
.req { color: #ff6d5a; font-weight: 400; }
.pl-chat { left: 891px; top: 190px; }
.pl-mem { left: 1003px; top: 190px; }
.pl-tool { left: 1065px; top: 190px; }
.pl-model { left: 759px; top: 266px; }
.pl-mem2 { left: 903px; top: 266px; }
.pl-tools { left: 1095px; top: 282px; }
.circ { position: absolute; width: 82px; height: 82px; border-radius: 50%; background: #252a3c; border: 2px solid #2aa568; display: flex; flex-direction: column; align-items: center; }
.c-model { left: 737px; top: 296px; }
.c-mem { left: 887px; top: 296px; }
.c-gmail { left: 1070px; top: 312px; }
.c-g { width: 28px; height: 28px; margin-top: 23px; }
.c-db { width: 28px; height: 32px; margin-top: 21px; }
.c-mcp { width: 30px; height: 30px; margin-top: 23px; }
.c-count { position: absolute; left: 0; right: 0; bottom: 6px; display: flex; align-items: center; justify-content: center; gap: 2px; color: #2aa568; font-size: 17px; font-weight: 600; line-height: 16px; }
.c-check { width: 15px; height: 13px; }
.nlabel { position: absolute; font-size: 16.500px; line-height: 21px; font-weight: 500; color: #f2f2f4; text-align: center; }
.nl-trig { left: 629px; top: 185px; width: 180px; }
.nl-model { left: 718px; width: 120px; top: 385px; }
.nl-mem { left: 848px; width: 160px; top: 385px; }
.nl-gmail { left: 1041px; width: 140px; top: 401px; }
.hide-chat { position: absolute; left: 840px; top: 408px; width: 160px; height: 53px; background: #2e3030; border: 1px solid #414244; border-bottom: 0; border-radius: 5px 5px 0 0; font-size: 18px; font-weight: 500; color: #f2f2f4; gap: 8px; z-index: 3; }
.hc-ic { width: 18px; height: 18px; }

.minimap { position: absolute; left: 20px; top: 242px; width: 251px; height: 148px; background: #9e9e9e; border-radius: 3px; padding: 44px 9px 0; }
.mm-inner { width: 233px; height: 61px; background: #2e3030; border: 1px solid #6f7072; position: relative; display: flex; justify-content: center; padding-top: 3px; }
.mm-sticky { width: 92px; height: 54px; background: #414244; position: relative; border-radius: 1px; }
.mm { position: absolute; background: #8d8e93; }
.mm-a { left: 15px; top: 8px; width: 12px; height: 12px; }
.mm-b { left: 42px; top: 8px; width: 29px; height: 12px; }
.mm-c { left: 23px; top: 35px; width: 10px; height: 11px; }
.mm-d { left: 42px; top: 35px; width: 10px; height: 11px; }
.mm-e { left: 65px; top: 37px; width: 10px; height: 11px; }
.ctrls { position: absolute; left: 20px; top: 409px; display: flex; gap: 14.500px; }
.ctrl { width: 53px; height: 52px; border: 1px solid #505153; border-radius: 5px; background: #2e3030; }
.rbtns { position: absolute; left: 1767px; top: 20px; display: flex; flex-direction: column; gap: 10px; }
.rbtn { width: 52px; height: 53px; border: 1px solid #505153; border-radius: 5px; background: #2e3030; }
.toast { position: absolute; left: 1407px; top: 316px; width: 412px; height: 65px; background: #414244; border-radius: 4px; display: flex; align-items: center; padding-left: 18px; }
.toast-ic { width: 26px; height: 26px; }
.toast-text { margin: -6px 0 0 18px; font-size: 19.800px; font-weight: 600; color: #eeeef2; }
.toast-x { width: 13px; height: 13px; margin-left: auto; margin-right: 22px; }

/* bottom panel */
.panel { flex: 1; display: grid; grid-template-columns: 552px 257px 1fr; background: #2e3030; border-top: 1px solid #505153; min-height: 0; }
.p-chat, .p-logs, .p-detail { min-width: 0; min-height: 0; overflow: hidden; display: flex; flex-direction: column; }
.p-logs, .p-detail { border-left: 1px solid #505153; }
.p-head { height: 42px; flex: none; border-bottom: 1px solid #505153; display: flex; align-items: center; padding-bottom: 2px; }
.p-chat .p-head { padding-left: 20px; }
.p-title { font-size: 14.500px; font-weight: 600; color: #f2f2f4; }
.session { margin-left: auto; font-size: 15.300px; color: #a5a6a8; }
.undo { width: 16px; height: 16px; margin: 0 20px 0 18px; }
.msg-row { height: 24px; flex: none; display: flex; padding-left: 20px; overflow: hidden; }
.msg { width: 473px; background: #414244; padding-left: 10px; font-size: 15px; line-height: 19px; color: #f2f2f4; }
.msg-scroll { width: 38px; margin-left: 20px; height: 24px; background: #fff; display: flex; justify-content: space-between; padding: 0 4px 0 4px; overflow: hidden; }
.ms-dashes { display: flex; flex-direction: column; justify-content: space-between; width: 11px; margin-top: -2px; margin-bottom: -2px; }
.ms-dashes i { display: block; height: 4px; background: #a3a3a3; border-radius: 1px; }
.ms-tris { display: flex; flex-direction: column; justify-content: space-between; padding: 2px 0; }
.ms-tris .tri-up, .ms-tris .tri-down { border-left-width: 5px; border-right-width: 5px; border-bottom-width: 7px; border-top-width: 7px; }
.chat-input { margin: 1px 0 0 15px; width: 521px; height: 192px; background: #414244; border: 1px solid #505153; border-radius: 12px; display: flex; flex-direction: column; padding: 18px 0 0 60px; position: relative; }
.ph { font-size: 16.200px; color: #77787a; }
.ci-bottom { position: absolute; left: 0; right: 0; bottom: 0; height: 54px; }
.ci-arrows { position: absolute; left: 25px; top: 10px; display: flex; flex-direction: column; gap: 18px; }
.ic8w { width: 8px; height: 5px; }
.pill { position: absolute; left: 393px; top: 14px; width: 60px; height: 31px; border-radius: 16px; overflow: hidden; display: flex; }
.pill-l { width: 30px; background: #fff; display: flex; align-items: center; justify-content: center; }
.pill-r { flex: 1; background: #0a8f4d; display: flex; align-items: center; justify-content: center; }
.send { position: absolute; left: 475px; top: 12px; width: 26px; height: 22px; }

.p-logs .p-head { padding-left: 19px; }
.clear { margin-left: auto; margin-right: 20px; display: flex; align-items: center; gap: 6px; font-size: 15.300px; color: #a5a6a8; }
.clear-ic { width: 12px; height: 16px; }
.logs-sub { height: 39px; flex: none; display: flex; align-items: center; padding-left: 19px; font-size: 15px; color: #909193; }
.vline { display: block; width: 1px; height: 20px; background: #505153; margin: 0 10px; }
.logs-body { flex: 1; display: flex; min-height: 0; overflow: hidden; padding-top: 1px; }
.tree { width: 225px; margin-left: 9px; flex: none; position: relative; }
.t-root { height: 40px; background: #505153; border-radius: 5px; width: 215px; display: flex; align-items: center; padding: 0 0 2px 10px; }
.t-robot { width: 20px; height: 17px; }
.t-root-name { margin-left: 10px; font-size: 14.500px; font-weight: 500; color: #f2f2f4; }
.t-chev { width: 11px; height: 7px; margin-left: auto; margin-right: 14px; }
.t-row { height: 40.300px; display: flex; align-items: center; position: relative; padding: 0 0 2px 50px; font-size: 15px; font-weight: 500; color: #e8e8ea; white-space: nowrap; }
.t-row::before { content: ""; position: absolute; left: 21px; top: 0; width: 19px; height: 20px; border-left: 2px solid #505153; border-bottom: 2px solid #505153; border-bottom-left-radius: 8px; }
.t-row::after { content: ""; position: absolute; left: 21px; top: 20px; height: 21px; border-left: 2px solid #505153; }
.t-ic { width: 19px; height: 19px; margin-right: 11px; }
.t-db { height: 22px; }
.log-scroll { width: 19px; background: #fff; display: flex; flex-direction: column; align-items: center; padding: 6px 0 5px; }
.tri-big { border-left-width: 7px; border-right-width: 7px; }
.tri-big.tri-up { border-bottom-width: 9px; }
.tri-big.tri-down { border-top-width: 9px; }
.thumb { display: block; width: 11px; height: 98px; background: #8f8f8f; border-radius: 6px; margin: 28px 0 auto; }

.d-head { padding-left: 9px; }
.d-robot { width: 20px; height: 17px; }
.d-name { margin-left: 11px; font-size: 14.500px; font-weight: 600; color: #f2f2f4; }
.d-meta { font-size: 15px; color: #a5a6a8; margin-left: 10px; }
.d-vline { margin: 0 0 0 10px; }
.d-btn { width: 59px; height: 27px; border: 1px solid #505153; border-radius: 4px; font-size: 14px; font-weight: 500; color: #f2f2f4; }
.d-input { margin-left: auto; }
.d-output { margin-left: 10px; width: 71px; background: #7a453c; border-color: #7a453c; }
.d-dots { margin-left: 20px; width: 18px; font-size: 14px; font-weight: 700; color: #c9cace; }
.d-chev { width: 12px; height: 8px; margin: 0 20px 0 15px; }
.out-row { height: 43px; flex: none; display: flex; align-items: center; padding: 0 10px 0 9px; justify-content: space-between; }
.out-label { font-size: 14px; font-weight: 500; letter-spacing: 3.400px; color: #a5a6a8; }
.out-count { font-size: 14px; color: #a5a6a8; }
.out-table { margin-left: 9px; width: 1011px; border-collapse: collapse; font-size: 15px; }
.out-table th, .out-table td { border: 1px solid #505153; text-align: left; padding: 0 8px 3px; }
.out-table th { height: 33px; font-weight: 600; color: #fff; font-size: 14.500px; }
.out-table td { height: 34px; color: #c9cace; }

/* taskbar */
.taskbar { height: 60px; flex: none; background: #121212; position: relative; display: flex; justify-content: flex-end; font-family: "Open Sans", "Noto Sans", sans-serif; color: #fff; }
.apps { position: absolute; left: 547px; top: 0; height: 60px; display: flex; align-items: center; }
.app-ic { width: 55.200px; height: 60px; display: flex; align-items: center; justify-content: center; position: relative; }
.app-ic svg { width: 30px; height: 30px; }
.app-run::after { content: ""; position: absolute; bottom: 4px; left: 24px; width: 7px; height: 4px; border-radius: 2px; background: #8a8a8a; }
.app-brave { background: #262728; border-radius: 5px; height: 50px; width: 50px; margin-left: 2px; }
.brave-line { position: absolute; left: 14px; bottom: 0; width: 20px; height: 4px; border-radius: 2px; background: #4cc2ff; }
.tray { display: flex; align-items: center; padding-right: 25px; }
.tray-up { width: 14px; height: 8px; }
.lang { margin-left: 21px; width: 40px; text-align: center; font-size: 14.300px; line-height: 20px; }
.tray-ic { width: 20px; height: 16px; margin-left: 0; }
.lang + .tray-ic { margin-left: 17px; }
.tray-ic + .tray-ic { margin-left: 10px; }
.clock { width: 90px; margin-left: 7px; text-align: right; font-size: 14.600px; line-height: 20px; }
```
